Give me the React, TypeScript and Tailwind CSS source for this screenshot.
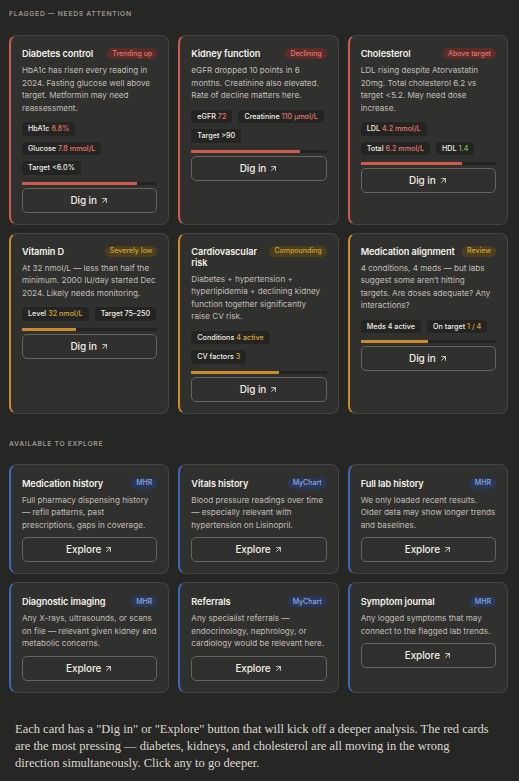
import React from 'react';
import { ArrowUpRight } from 'lucide-react';

type Tone = 'red' | 'amber' | 'blue' | 'green';

interface Chip {
  label: string;
  value?: string;
  tone?: Tone;
}

interface FlagCard {
  title: string;
  badge: string;
  tone: 'red' | 'amber';
  text: string;
  chips: Chip[];
  progress: number;
}

interface ExploreCard {
  title: string;
  badge: string;
  text: string;
}

const valueColor: Record<Tone, string> = {
  red: 'text-[#e3786c]',
  amber: 'text-[#d9a63c]',
  blue: 'text-[#8fa8e0]',
  green: 'text-[#8cbf55]',
};

const flagged: FlagCard[] = [
  {
    title: 'Diabetes control',
    badge: 'Trending up',
    tone: 'red',
    text: 'HbA1c has risen every reading in 2024. Fasting glucose well above target. Metformin may need reassessment.',
    chips: [
      { label: 'HbA1c', value: '6.8%', tone: 'red' },
      { label: 'Glucose', value: '7.8 mmol/L', tone: 'red' },
      { label: 'Target <6.0%' },
    ],
    progress: 85,
  },
  {
    title: 'Kidney function',
    badge: 'Declining',
    tone: 'red',
    text: 'eGFR dropped 10 points in 6 months. Creatinine also elevated. Rate of decline matters here.',
    chips: [
      { label: 'eGFR', value: '72', tone: 'red' },
      { label: 'Creatinine', value: '110 µmol/L', tone: 'red' },
      { label: 'Target >90' },
    ],
    progress: 80,
  },
  {
    title: 'Cholesterol',
    badge: 'Above target',
    tone: 'red',
    text: 'LDL rising despite Atorvastatin 20mg. Total cholesterol 6.2 vs target <5.2. May need dose increase.',
    chips: [
      { label: 'LDL', value: '4.2 mmol/L', tone: 'red' },
      { label: 'Total', value: '6.2 mmol/L', tone: 'red' },
      { label: 'HDL', value: '1.4', tone: 'green' },
    ],
    progress: 75,
  },
  {
    title: 'Vitamin D',
    badge: 'Severely low',
    tone: 'amber',
    text: 'At 32 nmol/L — less than half the minimum. 2000 IU/day started Dec 2024. Likely needs monitoring.',
    chips: [
      { label: 'Level', value: '32 nmol/L', tone: 'amber' },
      { label: 'Target 75–250' },
    ],
    progress: 40,
  },
  {
    title: 'Cardiovascular risk',
    badge: 'Compounding',
    tone: 'amber',
    text: 'Diabetes + hypertension + hyperlipidemia + declining kidney function together significantly raise CV risk.',
    chips: [
      { label: 'Conditions', value: '4 active', tone: 'amber' },
      { label: 'CV factors', value: '3', tone: 'amber' },
    ],
    progress: 65,
  },
  {
    title: 'Medication alignment',
    badge: 'Review',
    tone: 'amber',
    text: '4 conditions, 4 meds — but labs suggest some aren’t hitting targets. Are doses adequate? Any interactions?',
    chips: [
      { label: 'Meds 4 active' },
      { label: 'On target', value: '1 / 4', tone: 'amber' },
    ],
    progress: 50,
  },
];

const explore: ExploreCard[] = [
  {
    title: 'Medication history',
    badge: 'MHR',
    text: 'Full pharmacy dispensing history — refill patterns, past prescriptions, gaps in coverage.',
  },
  {
    title: 'Vitals history',
    badge: 'MyChart',
    text: 'Blood pressure readings over time — especially relevant with hypertension on Lisinopril.',
  },
  {
    title: 'Full lab history',
    badge: 'MHR',
    text: 'We only loaded recent results. Older data may show longer trends and baselines.',
  },
  {
    title: 'Diagnostic imaging',
    badge: 'MHR',
    text: 'Any X-rays, ultrasounds, or scans on file — relevant given kidney and metabolic concerns.',
  },
  {
    title: 'Referrals',
    badge: 'MyChart',
    text: 'Any specialist referrals — endocrinology, nephrology, or cardiology would be relevant here.',
  },
  {
    title: 'Symptom journal',
    badge: 'MHR',
    text: 'Any logged symptoms that may connect to the flagged lab trends.',
  },
];

const SectionLabel = ({ children }: { children: React.ReactNode }) => (
  <div className="text-[6.8px] font-semibold uppercase tracking-[0.1em] text-[#9b9891] leading-[10px]">{children}</div>
);

const ActionButton = ({ label }: { label: string }) => (
  <button
    type="button"
    className="flex h-[25px] w-full items-center justify-center gap-[3px] rounded-[5px] border border-[#66655f] text-[10px] font-medium tracking-[-0.1px] text-[#efede6]"
  >
    {label}
    <ArrowUpRight size={9} strokeWidth={2.2} />
  </button>
);

const FlaggedCard = ({ card }: { card: FlagCard }) => {
  const red = card.tone === 'red';
  return (
    <div
      className={`flex flex-col rounded-[8px] border border-[#45443f] border-l-2 bg-[#30302e] pl-[11px] pr-[11px] pt-[12px] pb-[11px] ${
        red ? 'border-l-[#cf5a4e]' : 'border-l-[#c98b2c]'
      }`}
    >
      <div className="flex items-start justify-between gap-[4px]">
        <div className="text-[9.2px] font-semibold leading-[11px] tracking-[-0.1px] text-[#f3f1ea]">{card.title}</div>
        <span
          className={`shrink-0 whitespace-nowrap rounded-full px-[5px] py-[1.5px] text-[7px] font-medium leading-[8px] ${
            red ? 'bg-[#5b2c28] text-[#e0786c]' : 'bg-[#4b3f1e] text-[#d4a43a]'
          }`}
        >
          {card.badge}
        </span>
      </div>
      <p className="mt-[5px] text-[8.15px] leading-[12.5px] text-[#c2bfb7]">{card.text}</p>
      <div className="mt-[8px] flex flex-wrap gap-[6px]">
        {card.chips.map((c) => (
          <span
            key={c.label}
            className="whitespace-nowrap rounded-[4px] bg-[#242422] px-[6px] py-[3px] text-[7.2px] font-medium leading-[7.5px] text-[#f0eee7]"
          >
            {c.label}
            {c.value && <span className={`ml-[2px] ${valueColor[c.tone ?? 'red']}`}>{c.value}</span>}
          </span>
        ))}
      </div>
      <div className="mt-[7px] h-[3px] w-full bg-[#232321]">
        <div
          className={`h-full ${red ? 'bg-[#cf5a4e]' : 'bg-[#c98b2c]'}`}
          style={{ width: `${card.progress}%` }}
        />
      </div>
      <div className="mt-[3px]">
        <ActionButton label="Dig in" />
      </div>
    </div>
  );
};

const ExploreTile = ({ card }: { card: ExploreCard }) => (
  <div className="flex flex-col rounded-[8px] border border-[#45443f] border-l-2 border-l-[#3e67b8] bg-[#30302e] pl-[11px] pr-[11px] pt-[13px] pb-[11px]">
    <div className="flex items-start justify-between gap-[4px]">
      <div className="text-[9.2px] font-semibold leading-[11px] tracking-[-0.1px] text-[#f3f1ea]">{card.title}</div>
      <span className="shrink-0 whitespace-nowrap rounded-full bg-[#29385a] px-[5px] py-[1.5px] text-[7px] font-medium leading-[8px] text-[#8ea6df]">
        {card.badge}
      </span>
    </div>
    <p className="-mr-[1px] mt-[5px] text-[8.15px] leading-[12.5px] text-[#c2bfb7]">{card.text}</p>
    <div className="mt-[6px]">
      <ActionButton label="Explore" />
    </div>
  </div>
);

export default function App() {
  return (
    <div className="min-h-[781px] w-[519px] bg-[#262624] font-[Inter,sans-serif]">
      <div className="pl-[9px] pr-[11px] pt-[9px]">
        <SectionLabel>Flagged — needs attention</SectionLabel>
        <div className="mt-[16px] grid grid-cols-3 gap-x-[9px] gap-y-[8px]">
          {flagged.map((c) => (
            <FlaggedCard key={c.title} card={c} />
          ))}
        </div>
        <div className="mt-[25px]">
          <SectionLabel>Available to explore</SectionLabel>
        </div>
        <div className="mt-[15px] grid grid-cols-3 gap-x-[9px] gap-y-[8px]">
          {explore.map((c) => (
            <ExploreTile key={c.title} card={c} />
          ))}
        </div>
      </div>
      <p className="mt-[28px] pl-[15px] pr-[24px] pb-[12px] font-['Liberation_Serif',serif] text-[12.5px] leading-[17px] text-[#dcd9d0]">
        Each card has a "Dig in" or "Explore" button that will kick off a deeper analysis. The red cards are the most
        pressing — diabetes, kidneys, and cholesterol are all moving in the wrong direction simultaneously. Click any to
        go deeper.
      </p>
    </div>
  );
}
